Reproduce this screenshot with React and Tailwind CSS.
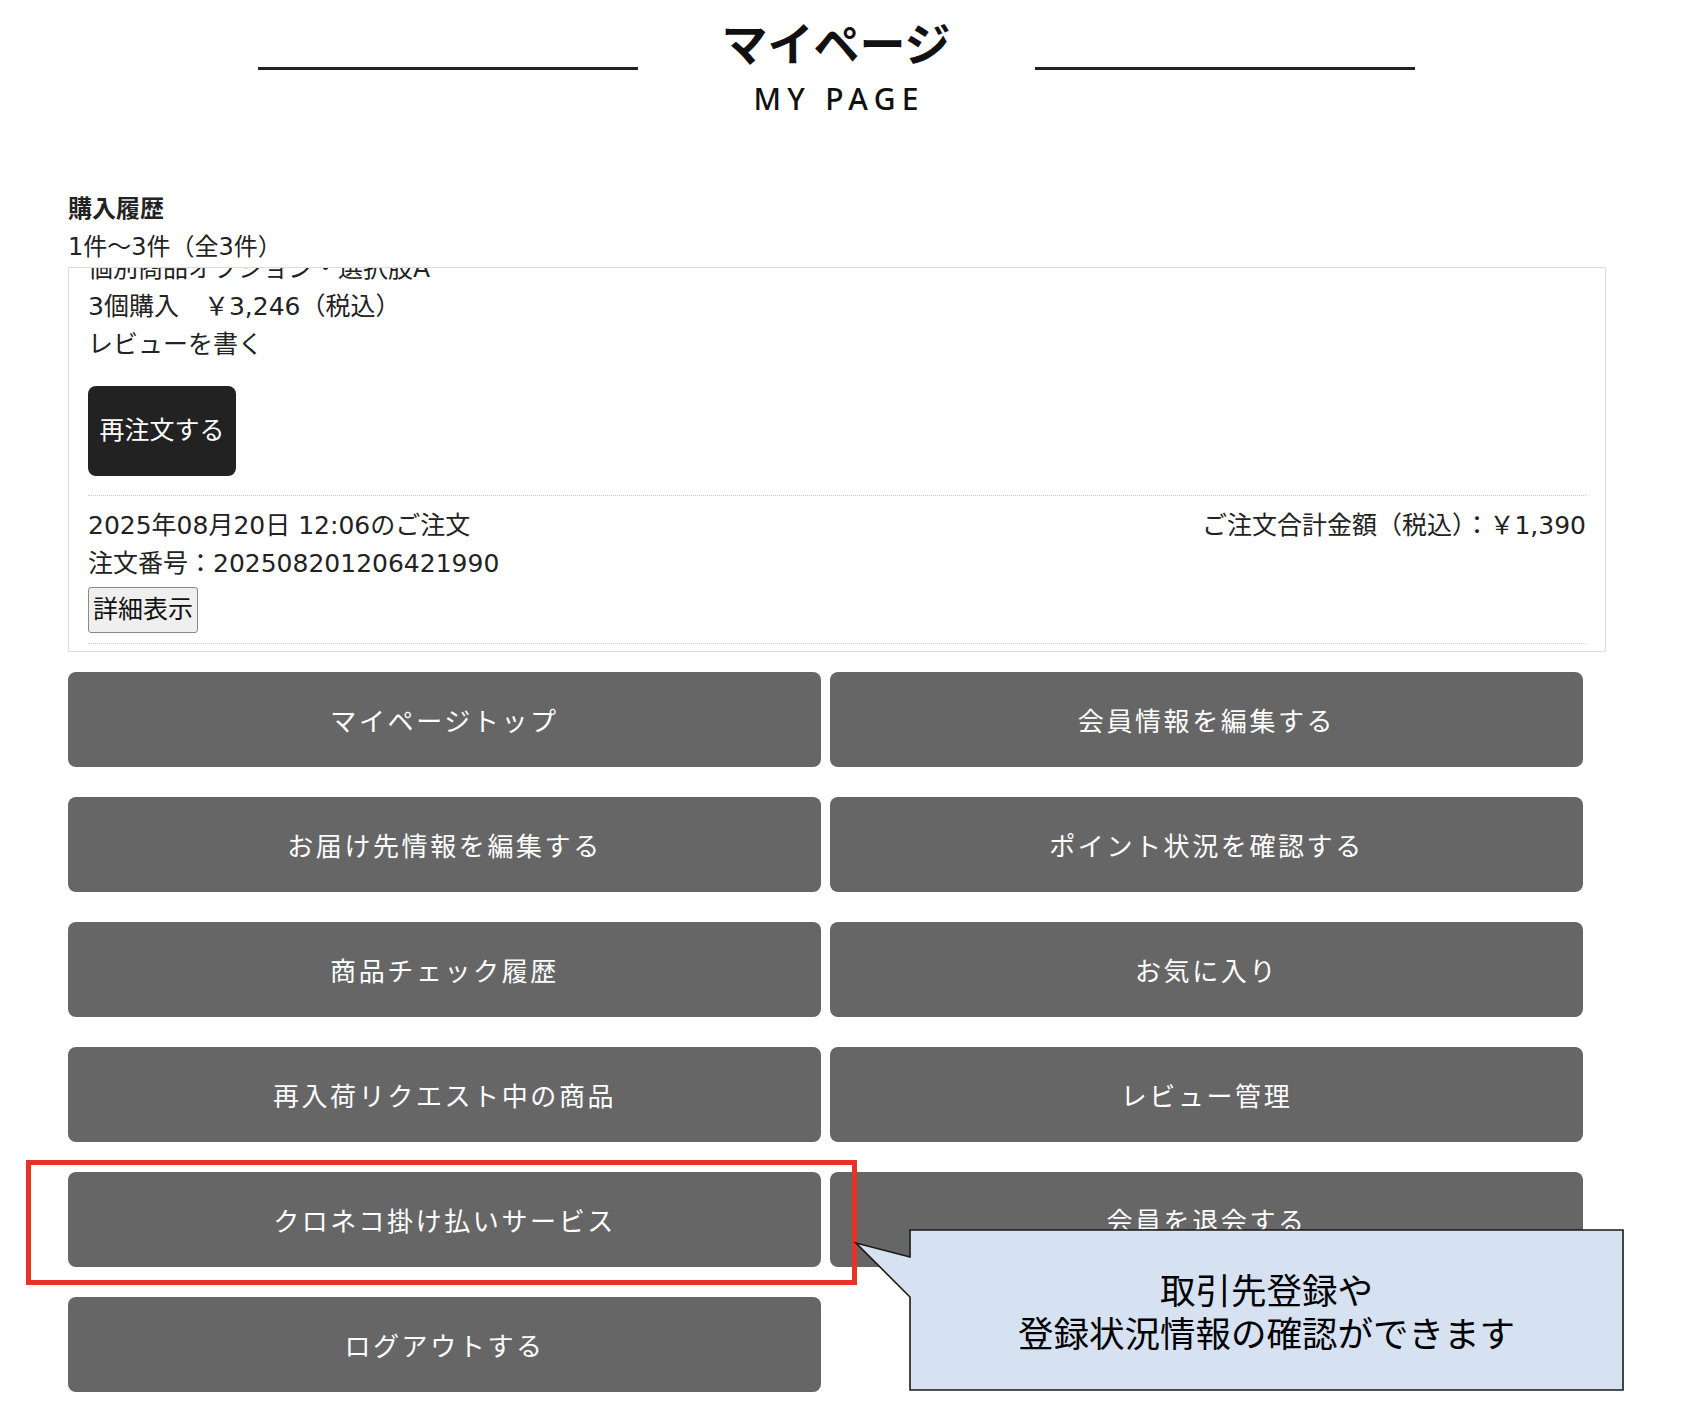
import React from "react";

// # Menu buttons (left / right, row by row) #
const menuItems = [
    "マイページトップ",
    "会員情報を編集する",
    "お届け先情報を編集する",
    "ポイント状況を確認する",
    "商品チェック履歴",
    "お気に入り",
    "再入荷リクエスト中の商品",
    "レビュー管理",
    "クロネコ掛け払いサービス",
    "会員を退会する",
    "ログアウトする",
];

const bodyFont = "font-['DejaVu_Sans','Noto_Sans_CJK_JP',sans-serif]";

// # 'PageTitle' Component #
const PageTitle = () => (
    <header className="flex justify-center pt-[18px]">
        <span className="mt-[49px] h-[3px] w-[380px] bg-[#222]" />
        <div className="flex w-[397px] flex-col items-center text-[#111]">
            <h1 className="font-['Noto_Sans_CJK_JP',sans-serif] text-[46px] font-bold leading-[46px]">
                マイページ
            </h1>
            <p className="mt-[20px] pl-[0.21em] font-['Noto_Sans',sans-serif] text-[30px] font-medium leading-[30px] tracking-[0.21em]">
                MY PAGE
            </p>
        </div>
        <span className="mt-[49px] h-[3px] w-[380px] bg-[#222]" />
    </header>
);

// # 'OrderHistory' Component #
const OrderHistory = () => (
    <section className={`mt-[76px] text-[#222] ${bodyFont}`}>
        <h2 className="text-[24px] font-bold leading-[38px]">購入履歴</h2>
        <p className="text-[24px] leading-[38px]">1件〜3件（全3件）</p>

        {/* # Scrolled order list # */}
        <div className="-mr-[2px] mt-[1px] h-[385px] overflow-hidden border border-[#ddd] px-[19px]">
            <div className="-mt-[18px] text-[25px] leading-[38px]">
                <p>個別商品オプション・選択肢A</p>
                <p>3個購入　￥3,246（税込）</p>
                <p>レビューを書く</p>
                <button className="mt-[22px] flex h-[90px] w-[148px] items-center justify-center rounded-[8px] bg-[#222] text-[25px] text-white">
                    再注文する
                </button>
                <div className="mt-[19px] border-t border-dotted border-[#ccc]" />
                <div className="mt-[11px] flex justify-between">
                    <span>2025年08月20日 12:06のご注文</span>
                    <span>ご注文合計金額（税込）：￥1,390</span>
                </div>
                <p>注文番号：202508201206421990</p>
                <button className="mt-[4px] flex h-[46px] items-center rounded-[3px] border border-[#8a8a8a] bg-[#efefef] px-[4px] text-[25px] text-[#111]">
                    詳細表示
                </button>
                <div className="mt-[10px] border-t border-dotted border-[#ccc]" />
            </div>
        </div>
    </section>
);

// # 'MenuGrid' Component #
const MenuGrid = () => (
    <nav className="mt-[20px] grid w-[1515px] grid-cols-2 gap-x-[9px] gap-y-[30px]">
        {menuItems.map((label) => (
            <a
                key={label}
                href="#"
                className="flex h-[95px] items-center justify-center rounded-[8px] bg-[#666] font-['Noto_Sans_CJK_JP',sans-serif] text-[26px] tracking-[0.1em] text-white"
            >
                {label}
            </a>
        ))}
    </nav>
);

// # 'Callout' annotation over the page #
const Callout = () => (
    <>
        <div className="absolute left-[26px] top-[1160px] h-[125px] w-[831px] border-[5px] border-[#e63329]" />
        <svg
            className="absolute left-[854px] top-[1228px]"
            width="772"
            height="165"
            viewBox="0 0 772 165"
        >
            <path
                d="M56 2 H769 V162 H56 V69 L2 15 L56 29 Z"
                fill="#d6e2f2"
                stroke="#1a1a1a"
                strokeWidth="1.6"
                strokeLinejoin="miter"
            />
        </svg>
        <div className="absolute left-[910px] top-[1230px] flex h-[160px] w-[713px] flex-col items-center justify-center font-['Noto_Sans_CJK_JP',sans-serif] text-[35.5px] leading-[43px] text-black">
            <p>取引先登録や</p>
            <p>登録状況情報の確認ができます</p>
        </div>
    </>
);

export default function App() {
    return (
        <div className="relative min-h-[1408px] w-[1672px] bg-white">
            <PageTitle />
            <div className="px-[68px]">
                <OrderHistory />
                <MenuGrid />
            </div>
            <Callout />
        </div>
    );
}
